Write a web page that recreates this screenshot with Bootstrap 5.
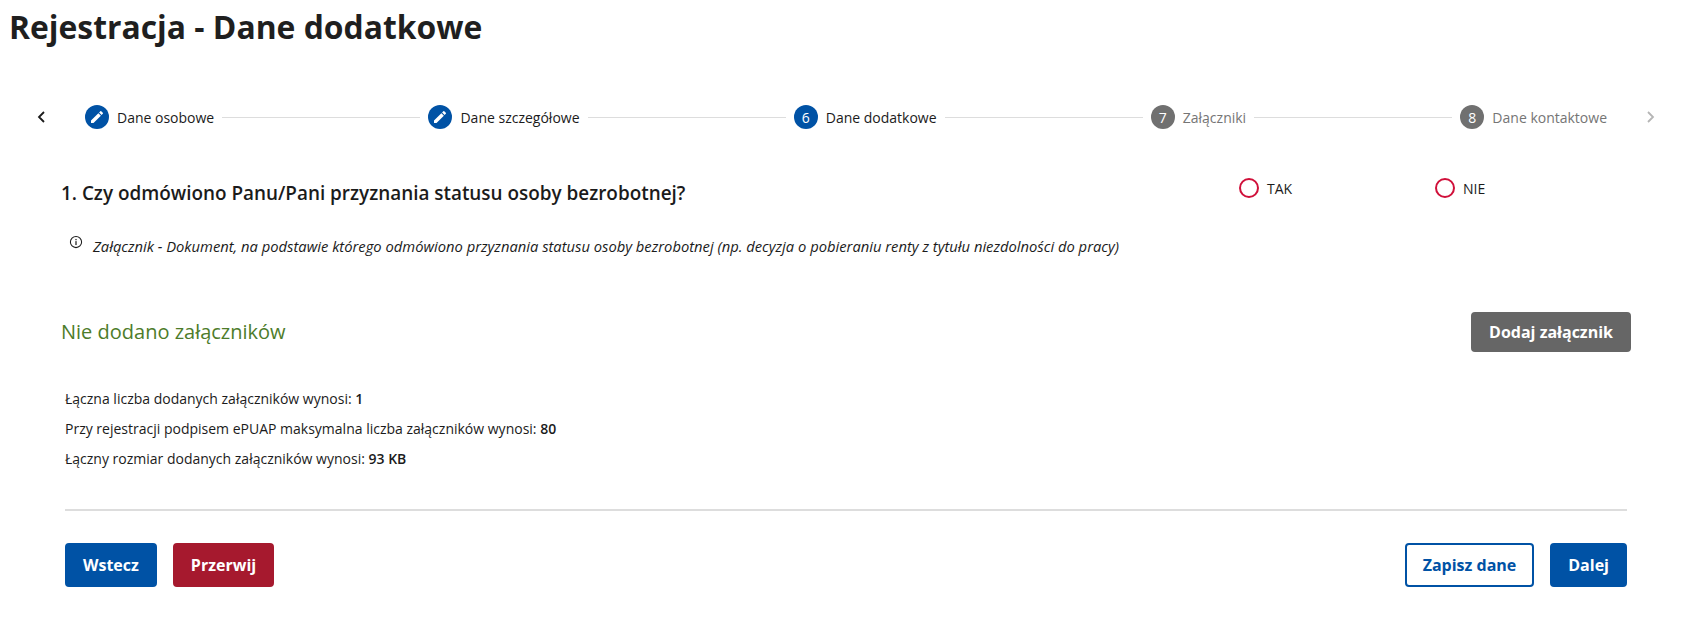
<!DOCTYPE html>
<html lang="pl">
<head>
<meta charset="utf-8">
<title>Rejestracja - Dane dodatkowe</title>
<link href="https://cdn.jsdelivr.net/npm/bootstrap@5.3.0/dist/css/bootstrap.min.css" rel="stylesheet">
<style>
body{font-family:"Open Sans",sans-serif;color:#1b1b1b;font-size:14px;background:#fff;overflow:hidden}
.page-title{font-size:31.85px;font-weight:700;line-height:44px;margin:5px 0 0 9px;color:#1f1f1f}
.stepper-row{margin-top:44px;height:48px;padding:0 27px 0 32px}
.chev{width:18px;height:18px;flex:none}
.steps{flex:1;margin:0 35px 0 35px}
.step{flex:none;gap:8px;font-size:14px}
.step-dot{width:24px;height:24px;border-radius:50%;flex:none;color:#fff;background:#0052a5;font-size:14px}
.step-off .step-dot{background:#707070}
.step-off{color:#757575}
.step-line{flex:1;height:1px;background:#ddd;margin:0 8px}
.quest-row{padding:0 0 0 61px;margin-top:27px;height:40px}
.quest{font-size:18.9px;font-weight:600;line-height:24px;width:1178px;margin:10px 0 0}
.radio-opt{width:196px;gap:8px;font-size:14px}
.radio-opt .form-check-input{width:20px;height:20px;margin:0;border:2px solid #d0103a;flex:none;float:none}
.info-row{padding-left:69px;margin-top:27px;gap:10px}
.info-row em{font-size:14.75px;line-height:22px}
.attach-row{padding:0 56px 0 61px;margin-top:55px}
.none-msg{font-size:20px;color:#4d7c2a;margin:0}
.btn-page{font-size:16px;font-weight:700;border-radius:4px;padding:0 16px;height:44px;display:inline-flex;align-items:center;border-width:2px}
.btn-gray{background:#666;border-color:#666;color:#fff;height:40px}
.btn-blue{background:#0052a5;border-color:#0052a5;color:#fff}
.btn-crim{background:#a6192e;border-color:#a6192e;color:#fff}
.btn-line{background:#fff;border-color:#0052a5;color:#0052a5}
.stats{padding-left:65px;margin-top:32px;line-height:30px}
.stats b{font-weight:600}
.rule{margin:35px 60px 0 65px;border:0;border-top:2px solid #ddd;opacity:1}
.actions{padding:0 60px 0 65px;margin-top:32px}
</style>
</head>
<body>
<h1 class="page-title">Rejestracja - Dane dodatkowe</h1>

<div class="stepper-row d-flex align-items-center">
  <svg class="chev" viewBox="0 0 18 18" fill="none" stroke="#1b1b1b" stroke-width="1.800"><path d="M12 4 7 9l5 5"/></svg>
  <div class="steps d-flex align-items-center">
    <div class="step d-flex align-items-center"><span class="step-dot d-flex align-items-center justify-content-center"><svg width="16" height="16" viewBox="0 0 24 24" fill="#fff"><path d="M3 17.25V21h3.75L17.81 9.94l-3.75-3.75L3 17.25zM20.71 7.04a1 1 0 0 0 0-1.41l-2.34-2.34a1 1 0 0 0-1.41 0l-1.83 1.83 3.75 3.75 1.83-1.83z"/></svg></span>Dane osobowe</div>
    <div class="step-line"></div>
    <div class="step d-flex align-items-center"><span class="step-dot d-flex align-items-center justify-content-center"><svg width="16" height="16" viewBox="0 0 24 24" fill="#fff"><path d="M3 17.25V21h3.75L17.81 9.94l-3.75-3.75L3 17.25zM20.71 7.04a1 1 0 0 0 0-1.41l-2.34-2.34a1 1 0 0 0-1.41 0l-1.83 1.83 3.75 3.75 1.83-1.83z"/></svg></span>Dane szczegółowe</div>
    <div class="step-line"></div>
    <div class="step d-flex align-items-center"><span class="step-dot d-flex align-items-center justify-content-center">6</span>Dane dodatkowe</div>
    <div class="step-line"></div>
    <div class="step step-off d-flex align-items-center"><span class="step-dot d-flex align-items-center justify-content-center">7</span>Załączniki</div>
    <div class="step-line"></div>
    <div class="step step-off d-flex align-items-center"><span class="step-dot d-flex align-items-center justify-content-center">8</span>Dane kontaktowe</div>
  </div>
  <svg class="chev" viewBox="0 0 18 18" fill="none" stroke="#b5b5b5" stroke-width="1.800"><path d="m6 4 5 5-5 5"/></svg>
</div>

<div class="quest-row d-flex align-items-center">
  <p class="quest">1. Czy odmówiono Panu/Pani przyznania statusu osoby bezrobotnej?</p>
  <label class="radio-opt d-flex align-items-center"><input class="form-check-input" type="radio" name="q1">TAK</label>
  <label class="radio-opt d-flex align-items-center"><input class="form-check-input" type="radio" name="q1">NIE</label>
</div>

<div class="info-row d-flex align-items-start">
  <svg width="14" height="14" viewBox="0 0 16 16" class="flex-none" fill="#1b1b1b"><path d="M8 1a7 7 0 1 0 0 14A7 7 0 0 0 8 1zm0 1.2a5.800 5.800 0 1 1 0 11.600A5.800 5.800 0 0 1 8 2.200z"/><rect x="7.300" y="7" width="1.400" height="4.500"/><rect x="7.300" y="4.500" width="1.400" height="1.500"/></svg>
  <em>Załącznik - Dokument, na podstawie którego odmówiono przyznania statusu osoby bezrobotnej (np. decyzja o pobieraniu renty z tytułu niezdolności do pracy)</em>
</div>

<div class="attach-row d-flex align-items-center justify-content-between">
  <p class="none-msg">Nie dodano załączników</p>
  <button type="button" class="btn btn-page btn-gray">Dodaj załącznik</button>
</div>

<div class="stats">
  <div>Łączna liczba dodanych załączników wynosi: <b>1</b></div>
  <div>Przy rejestracji podpisem ePUAP maksymalna liczba załączników wynosi: <b>80</b></div>
  <div>Łączny rozmiar dodanych załączników wynosi: <b>93 KB</b></div>
</div>

<hr class="rule">

<div class="actions d-flex justify-content-between">
  <div class="d-flex gap-3">
    <button type="button" class="btn btn-page btn-blue">Wstecz</button>
    <button type="button" class="btn btn-page btn-crim">Przerwij</button>
  </div>
  <div class="d-flex gap-3">
    <button type="button" class="btn btn-page btn-line">Zapisz dane</button>
    <button type="button" class="btn btn-page btn-blue">Dalej</button>
  </div>
</div>

<script src="https://cdn.jsdelivr.net/npm/bootstrap@5.3.0/dist/js/bootstrap.bundle.min.js"></script>
</body>
</html>
